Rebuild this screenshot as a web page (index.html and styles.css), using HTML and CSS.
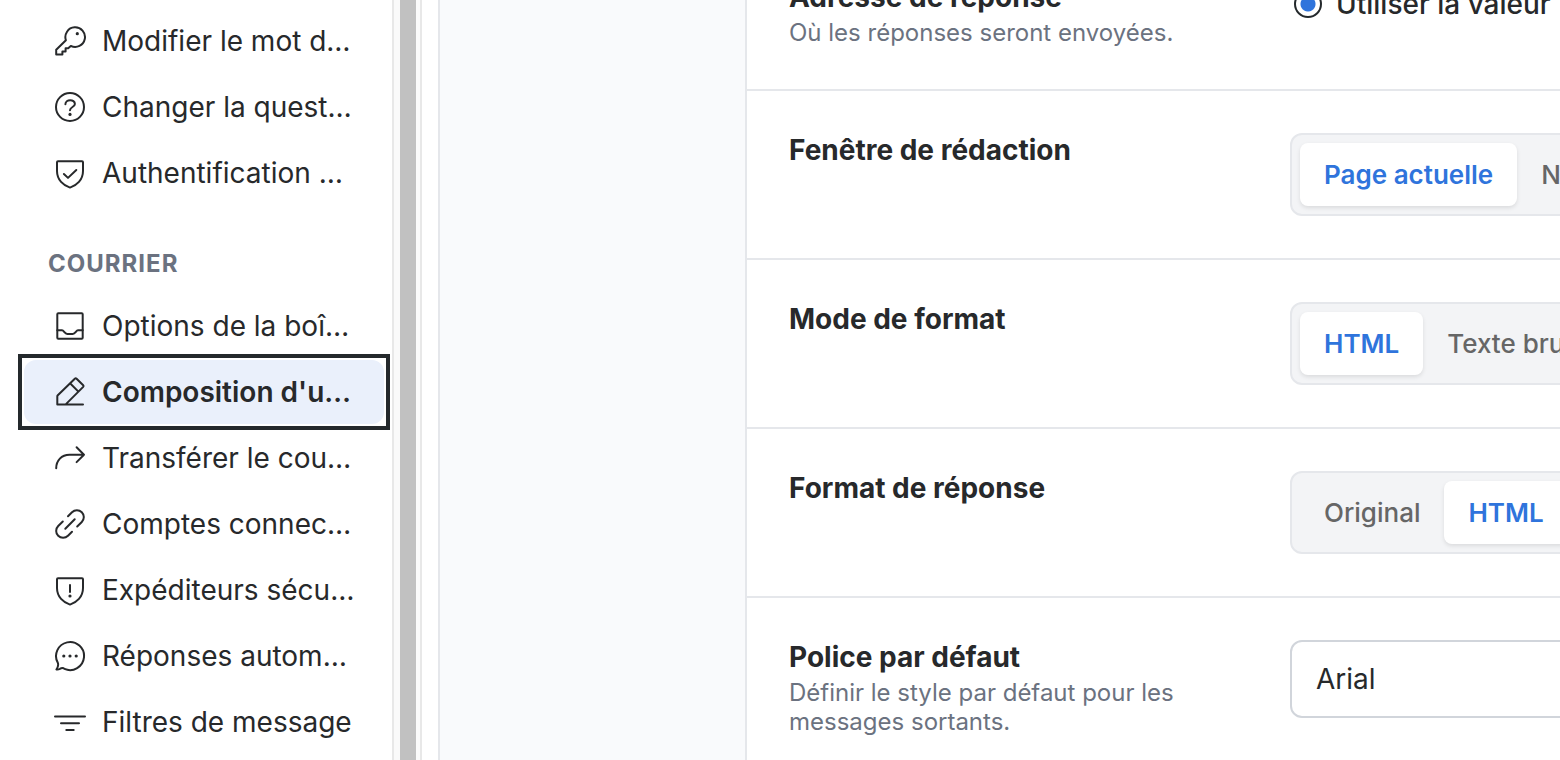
FILE: index.html
```html
<!DOCTYPE html>
<html lang="fr">
<head>
<meta charset="utf-8">
<title>Composition d'un message</title>
<link rel="stylesheet" href="styles.css">
</head>
<body>
<div class="app">
  <nav class="sidebar" aria-label="Options">
    <ul class="nav-list">
      <li><a class="nav-item" href="#password">
        <svg class="icon" viewBox="0 0 32 32" aria-hidden="true"><path d="M11.9 15.3 2.2 24.8V29.6H8.4V26.4H11.6V23.2H14.2L16.8 20.9A9.8 9.8 0 1 0 11.9 15.3Z"/><circle class="dot" cx="23.3" cy="8.7" r="1.6"/></svg>
        <span class="nav-text">Modifier le mot d…</span></a></li>
      <li><a class="nav-item" href="#question">
        <svg class="icon" viewBox="0 0 32 32" aria-hidden="true"><circle cx="16" cy="16" r="14"/><path d="M11.4 13.3C11.4 7.8 20.9 7.9 20.9 13 20.9 16.2 16 15.8 16 19.2"/><circle class="dot" cx="16" cy="23.4" r="1.6"/></svg>
        <span class="nav-text">Changer la quest…</span></a></li>
      <li><a class="nav-item" href="#auth">
        <svg class="icon" viewBox="0 0 32 32" aria-hidden="true"><path d="M4 4.3H28A1 1 0 0 1 29 5.3V14C29 23 22.5 28.5 16 30.6 9.5 28.5 3 23 3 14V5.3A1 1 0 0 1 4 4.3ZM9.9 17 14 20.9 22.3 13"/></svg>
        <span class="nav-text">Authentification …</span></a></li>
    </ul>
    <h2 class="nav-heading">COURRIER</h2>
    <ul class="nav-list">
      <li><a class="nav-item" href="#mailbox">
        <svg class="icon" viewBox="0 0 32 32" aria-hidden="true"><rect x="3.3" y="3.3" width="25.4" height="25.4" rx="1"/><path d="M3.3 20.3H8C10 20.3 10.5 24 13.3 24H18.7C21.5 24 22 20.3 24 20.3H28.7"/></svg>
        <span class="nav-text">Options de la boî…</span></a></li>
      <li class="focused"><a class="nav-item active" href="#compose" aria-current="page">
        <svg class="icon" viewBox="0 0 32 32" aria-hidden="true"><path d="M29 28.4H3.3V20.4Q3.3 19.8 3.8 19.3L20.8 2.7Q21.700 1.9 22.6 2.7L29.2 9.2Q30 10 29.2 10.9L11.7 28.4M16.3 7.5 24.4 15.6"/></svg>
        <span class="nav-text">Composition d'u…</span></a></li>
      <li><a class="nav-item" href="#forward">
        <svg class="icon" viewBox="0 0 32 32" aria-hidden="true"><path d="M2.2 26.3C2.2 18.5 7.5 12.7 15.5 12.7H30M22.6 5.3 30 12.7 22.6 20.1"/></svg>
        <span class="nav-text">Transférer le cou…</span></a></li>
      <li><a class="nav-item" href="#accounts">
        <svg class="icon" viewBox="0 0 32 32" aria-hidden="true"><path d="M11.3 20.7 20.7 11.3M14 8.2 18 4.2A6.9 6.9 0 0 1 27.8 14L23.2 18.5M18 23.8 14 27.8A6.9 6.9 0 0 1 4.2 18L8.8 13.5"/></svg>
        <span class="nav-text">Comptes connec…</span></a></li>
      <li><a class="nav-item" href="#senders">
        <svg class="icon" viewBox="0 0 32 32" aria-hidden="true"><path d="M4 4.3H28A1 1 0 0 1 29 5.3V14C29 23 22.5 28.5 16 30.6 9.5 28.5 3 23 3 14V5.3A1 1 0 0 1 4 4.3ZM16 11V18"/><circle class="dot" cx="16" cy="22" r="1.6"/></svg>
        <span class="nav-text">Expéditeurs sécu…</span></a></li>
      <li><a class="nav-item" href="#replies">
        <svg class="icon" viewBox="0 0 32 32" aria-hidden="true"><path d="M2.4 29.5C4 27.3 4.500 25 3.9 23A14 14 0 1 1 10.5 28.9C9 27.4 7.500 27.8 5.800 28.9 4.800 29.500 3.600 29.700 2.4 29.5Z"/><circle class="dot" cx="9.8" cy="16" r="1.6"/><circle class="dot" cx="16" cy="16" r="1.6"/><circle class="dot" cx="22.2" cy="16" r="1.6"/></svg>
        <span class="nav-text">Réponses autom…</span></a></li>
      <li><a class="nav-item" href="#filters">
        <svg class="icon" viewBox="0 0 32 32" aria-hidden="true"><path d="M1 10.4H31M7 17.3H25M12.3 24H19.7"/></svg>
        <span class="nav-text">Filtres de message</span></a></li>
    </ul>
  </nav>
  <div class="scroll-track"><div class="scroll-thumb"></div></div>
  <main class="content">
    <form class="settings">
      <div class="row">
        <div class="info">
          <h3 class="label">Adresse de réponse</h3>
          <p class="hint">Où les réponses seront envoyées.</p>
        </div>
        <div class="reply">
          <label class="radio"><input type="radio" name="reply" checked>Utiliser la valeur</label>
          <input class="address" type="text" aria-label="Adresse de réponse">
        </div>
      </div>
      <div class="row">
        <div class="info"><h3 class="label">Fenêtre de rédaction</h3></div>
        <div class="segmented" role="group" aria-label="Fenêtre de rédaction">
          <button class="segment selected" type="button" aria-pressed="true">Page actuelle</button>
          <button class="segment" type="button" aria-pressed="false">Nouvelle fenêtre</button>
        </div>
      </div>
      <div class="row">
        <div class="info"><h3 class="label">Mode de format</h3></div>
        <div class="segmented" role="group" aria-label="Mode de format">
          <button class="segment selected" type="button" aria-pressed="true">HTML</button>
          <button class="segment" type="button" aria-pressed="false">Texte brut</button>
        </div>
      </div>
      <div class="row">
        <div class="info"><h3 class="label">Format de réponse</h3></div>
        <div class="segmented" role="group" aria-label="Format de réponse">
          <button class="segment" type="button" aria-pressed="false">Original</button>
          <button class="segment selected" type="button" aria-pressed="true">HTML</button>
        </div>
      </div>
      <div class="row">
        <div class="info">
          <label class="label" for="font">Police par défaut</label>
          <p class="hint">Définir le style par défaut pour les messages sortants.</p>
        </div>
        <select class="select" id="font"><option>Arial</option></select>
      </div>
    </form>
  </main>
</div>
</body>
</html>
```
FILE: styles.css
```css
* { box-sizing: border-box; }

body {
  margin: 0;
  overflow: hidden;
  background: #fff;
  color: #27292b;
  font-family: Inter, "Liberation Sans", sans-serif;
  font-size: 28px;
}

.app {
  display: flex;
  height: 100vh;
  overflow: hidden;
}

.sidebar {
  flex: 0 0 392px;
  padding: 9px 8px 0 24px;
}

.nav-list {
  display: flex;
  flex-direction: column;
  gap: 2px;
  margin: 0;
  padding: 0;
  list-style: none;
}

.nav-item {
  display: flex;
  align-items: center;
  gap: 16px;
  height: 64px;
  padding: 0 24px 0 30px;
  border-radius: 12px;
  color: inherit;
  text-decoration: none;
}

.nav-item.active {
  background: #eaf0fb;
  font-weight: 600;
}

.focused {
  outline: 4px solid #24292c;
  outline-offset: 2px;
}

.nav-text { white-space: nowrap; }

.icon {
  flex: none;
  width: 32px;
  height: 32px;
  fill: none;
  stroke: currentColor;
  stroke-width: 2;
  stroke-linecap: round;
  stroke-linejoin: round;
}

.icon .dot {
  fill: currentColor;
  stroke: none;
}

.nav-heading {
  margin: 43px 24px 14px;
  color: #6b7280;
  font-size: 24px;
  font-weight: 700;
  line-height: 32px;
  letter-spacing: 1px;
}

.scroll-track {
  flex: 0 0 30px;
  padding: 0 4px 0 6px;
  border: solid #e8e8e8;
  border-width: 0 2px;
  background: #fafafa;
}

.scroll-thumb {
  width: 16px;
  height: 100%;
  background: #c1c1c1;
}

.content {
  flex: 1;
  min-width: 0;
  margin-left: 16px;
  padding-left: 305px;
  border-left: 2px solid #e5e7eb;
  background: #f9fafc;
}

.settings {
  margin-top: -62px;
  border-left: 2px solid #e5e7eb;
  background: #fff;
}

.row {
  display: grid;
  grid-template-columns: 459px minmax(560px, 1fr);
  align-items: start;
  gap: 42px;
  padding: 42px;
  border-bottom: 2px solid #e5e7eb;
}

.row:last-child {
  border-bottom: 0;
  padding-bottom: 80px;
}

.label {
  display: block;
  margin: 0;
  font-size: 28px;
  font-weight: 700;
  line-height: 34px;
}

.hint {
  margin: 4px 0 0;
  color: #6b7280;
  font-size: 24px;
  line-height: 29px;
}

.reply {
  display: flex;
  align-items: flex-start;
  gap: 9px;
  height: 67px;
}

.radio {
  display: flex;
  align-items: center;
  gap: 14px;
  height: 48px;
  padding-left: 4px;
  font-weight: 500;
  white-space: nowrap;
}

.radio input {
  appearance: none;
  width: 28px;
  height: 28px;
  margin: 0;
  border: 2px solid #24292c;
  border-radius: 50%;
  background: radial-gradient(circle, #2f74dc 7px, #fff 8px);
}

.address {
  width: 300px;
  height: 41px;
  border: 2px solid #d1d5db;
}

.segmented {
  display: flex;
  justify-self: start;
  padding: 8px;
  border: 2px solid #e5e7eb;
  border-radius: 12px;
  background: #f3f4f6;
}

.segment {
  height: 63px;
  padding: 0 24px;
  border: 0;
  border-radius: 8px;
  background: none;
  color: #666;
  font-family: inherit;
  font-size: 26px;
  font-weight: 500;
  white-space: nowrap;
}

.segment.selected {
  background: #fff;
  box-shadow: 0 2px 4px rgba(0, 0, 0, 0.1);
  color: #2f74dc;
  font-weight: 600;
}

.select {
  appearance: none;
  width: 100%;
  height: 78px;
  padding: 0 24px;
  border: 2px solid #d1d5db;
  border-radius: 12px;
  background: #fff;
  color: inherit;
  font-family: inherit;
  font-size: 28px;
}
```
